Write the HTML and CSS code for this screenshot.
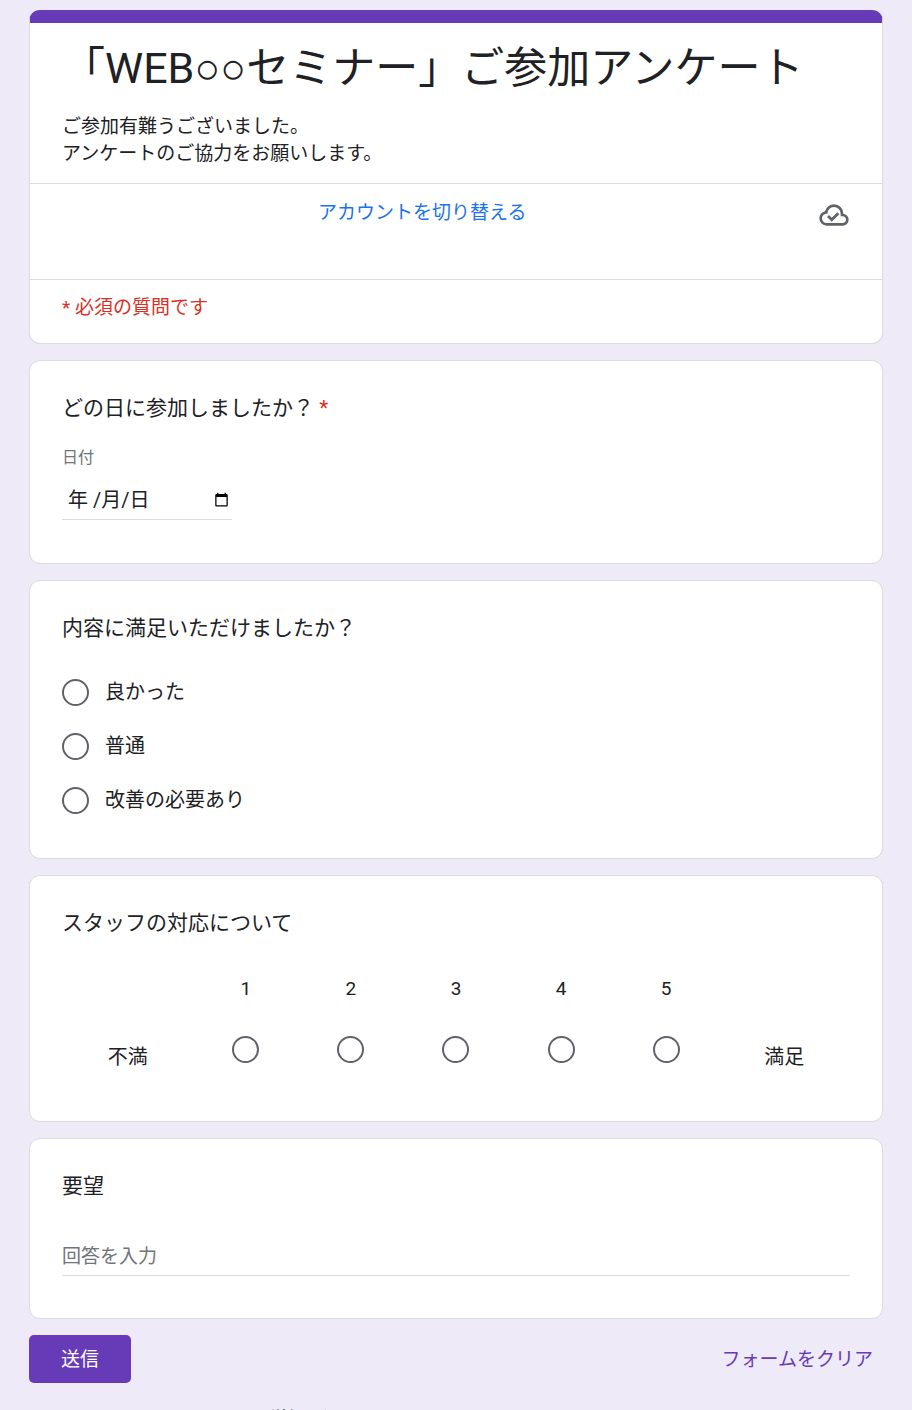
FILE: index.html
```
<!DOCTYPE html>
<html lang="ja">
<head>
    <meta charset="UTF-8">
    <meta name="viewport" content="width=device-width, initial-scale=1.0">
    <title>「WEB○○セミナー」ご参加アンケート</title>
    <link rel="stylesheet" href="styles.css">
</head>
<body>
    <form class="form" id="surveyForm">
        <div class="card header">
            <div class="intro">
                <h1>「WEB○○セミナー」ご参加アンケート</h1>
                <p>ご参加有難うございました。<br>アンケートのご協力をお願いします。</p>
            </div>
            <div class="account">
                <a href="#">アカウントを切り替える</a>
                <svg class="cloud" viewBox="0 -960 960 960" aria-hidden="true">
                    <path d="m414-280 226-226-58-58-169 169-84-84-57 57 142 142ZM260-160q-91 0-155.500-63T40-377q0-78 47-139t123-78q25-92 100-149t170-57q117 0 198.500 81.500T760-520q69 8 114.500 59.500T920-340q0 75-52.500 127.500T740-160H260Zm0-80h480q42 0 71-29t29-71q0-42-29-71t-71-29h-60v-80q0-83-58.500-141.500T480-720q-83 0-141.500 58.500T280-520h-20q-58 0-99 41t-41 99q0 58 41 99t99 41Z"/>
                </svg>
            </div>
            <p class="required-note">* 必須の質問です</p>
        </div>

        <div class="card question">
            <h2>どの日に参加しましたか？ <span class="required">*</span></h2>
            <label class="date-label" for="date">日付</label>
            <div class="date-field">
                <input type="text" id="date" name="date" placeholder="年 /月/日" required>
                <button type="button" class="picker" aria-label="日付を選択">
                    <svg viewBox="0 0 24 24" aria-hidden="true">
                        <path d="M20 3h-1V1h-2v2H7V1H5v2H4c-1.1 0-2 .9-2 2v16c0 1.1.9 2 2 2h16c1.1 0 2-.9 2-2V5c0-1.1-.9-2-2-2zm0 18H4V8h16v13z"/>
                    </svg>
                </button>
            </div>
        </div>

        <div class="card question">
            <h2 id="q-content">内容に満足いただけましたか？</h2>
            <div class="options" role="radiogroup" aria-labelledby="q-content">
                <label><input type="radio" name="content" value="good">良かった</label>
                <label><input type="radio" name="content" value="normal">普通</label>
                <label><input type="radio" name="content" value="bad">改善の必要あり</label>
            </div>
        </div>

        <div class="card question">
            <h2 id="q-staff">スタッフの対応について</h2>
            <div class="scale" role="radiogroup" aria-labelledby="q-staff">
                <span class="scale-end">不満</span>
                <label>1<input type="radio" name="staff" value="1"></label>
                <label>2<input type="radio" name="staff" value="2"></label>
                <label>3<input type="radio" name="staff" value="3"></label>
                <label>4<input type="radio" name="staff" value="4"></label>
                <label>5<input type="radio" name="staff" value="5"></label>
                <span class="scale-end">満足</span>
            </div>
        </div>

        <div class="card question">
            <h2><label for="request">要望</label></h2>
            <input type="text" class="answer" id="request" name="request" placeholder="回答を入力">
        </div>

        <div class="actions">
            <button type="submit" class="submit">送信</button>
            <button type="reset" class="clear">フォームをクリア</button>
        </div>
        <p class="notice">Google フォームでパスワードを送信しないでください。</p>
    </form>
</body>
</html>
```
FILE: styles.css
```
* {
    margin: 0;
    padding: 0;
    box-sizing: border-box;
}

body {
    background: #eeeaf8;
    color: #202124;
    font-family: Roboto, "Liberation Sans", "Noto Sans CJK JP", sans-serif;
    font-size: 19px;
    line-height: 27px;
}

input,
button {
    font: inherit;
    color: inherit;
    border: none;
    background: none;
}

button {
    cursor: pointer;
}

.form {
    padding: 10px 29px 0;
}

.card {
    background: #fff;
    border: 1px solid #dadce0;
    border-radius: 11px;
    margin-bottom: 16px;
}

/* header card */
.header {
    border-top: 13px solid #673ab7;
}

.intro {
    padding: 16px 32px;
}

h1 {
    font-size: 43px;
    font-weight: 400;
    line-height: 58px;
    margin-bottom: 16px;
}

.account {
    display: flex;
    justify-content: space-between;
    height: 97px;
    padding: 15px 32px 0 288px;
    border: 1px solid #dadce0;
    border-width: 1px 0;
}

.account a {
    color: #1a73e8;
    text-decoration: none;
}

.cloud {
    width: 32px;
    height: 32px;
    fill: #5f6368;
}

.required-note {
    padding: 14px 32px 22px;
    color: #d93025;
}

.required {
    color: #d93025;
}

/* questions */
.question {
    padding: 31px 32px 32px;
}

h2 {
    font-size: 21px;
    font-weight: 400;
    line-height: 32px;
}

.date-label {
    display: block;
    margin-top: 22px;
    font-size: 16px;
    line-height: 24px;
    color: #70757a;
}

.date-field {
    display: flex;
    align-items: center;
    width: 170px;
    height: 40px;
    margin: 10px 0 11px;
    padding: 0 3px 0 6px;
    border-bottom: 1px solid #dadce0;
}

.date-field input {
    flex: 1;
    min-width: 0;
    padding-top: 2px;
    font-size: 20px;
    outline: none;
}

.date-field input::placeholder {
    color: #202124;
    opacity: 1;
}

.picker {
    width: 16px;
    height: 16px;
    line-height: 0;
}

.picker svg {
    width: 15px;
    height: 15px;
}

input[type="radio"] {
    appearance: none;
    width: 27px;
    height: 27px;
    border: 2px solid #5f6368;
    border-radius: 50%;
}

input[type="radio"]:checked {
    border-color: #673ab7;
    background: radial-gradient(#673ab7 45%, transparent 50%);
}

.options {
    display: grid;
    gap: 27px;
    margin: 35px 0 12px;
    font-size: 20px;
}

.options label {
    display: flex;
    align-items: center;
    gap: 16px;
}

.scale {
    display: grid;
    grid-template-columns: 5fr repeat(5, 4fr) 5fr;
    margin: 36px 0 26px;
}

.scale label {
    display: flex;
    flex-direction: column;
    align-items: center;
    gap: 34px;
}

.scale-end {
    align-self: end;
    text-align: center;
    font-size: 20px;
    line-height: 12px;
}

.answer {
    display: block;
    width: 100%;
    height: 40px;
    margin: 34px 0 10px;
    padding-top: 2px;
    border-bottom: 1px solid #dadce0;
    outline: none;
}

.answer::placeholder {
    color: #70757a;
    opacity: 1;
}

/* footer */
.actions {
    display: flex;
    justify-content: space-between;
    align-items: center;
}

.submit {
    height: 48px;
    padding: 0 32px;
    border-radius: 5px;
    background: #673ab7;
    color: #fff;
}

.clear {
    padding: 0 10px;
    color: #673ab7;
}

.notice {
    margin-top: 23px;
    padding: 0 12px 24px;
    font-size: 16px;
    line-height: 24px;
}
```
